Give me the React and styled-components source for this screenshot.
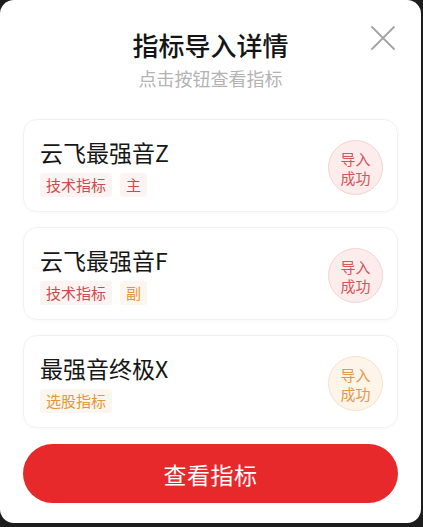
import React from "react";
import styled, { createGlobalStyle } from "styled-components";

const Global = createGlobalStyle`
  html, body { margin: 0; padding: 0; background: #1c1c1c; }
  body { font-family: "Noto Sans CJK SC", "Noto Sans", sans-serif; }
  * { box-sizing: border-box; }
`;

const Page = styled.div`
  width: 423px;
  height: 527px;
  background: #1c1c1c;
  overflow: hidden;
`;

const Modal = styled.div`
  position: relative;
  width: 421px;
  height: 523px;
  background: #fff;
  border-radius: 14px;
  padding: 27px 23px 20px 23px;
  display: flex;
  flex-direction: column;
`;

const Title = styled.h1`
  margin: 0;
  text-align: center;
  font-size: 26px;
  line-height: 36px;
  font-weight: 500;
  color: #151515;
`;

const Subtitle = styled.div`
  margin-top: 2px;
  text-align: center;
  font-size: 18px;
  line-height: 26px;
  color: #b3b3b3;
`;

const Close = styled.button`
  position: absolute;
  top: 26px;
  right: 26px;
  width: 24px;
  height: 24px;
  padding: 0;
  border: none;
  background: transparent;
  cursor: pointer;
`;

const List = styled.div`
  margin-top: 28px;
  display: flex;
  flex-direction: column;
  gap: 15px;
`;

const Card = styled.div`
  height: 93px;
  border: 1px solid #f1f1f1;
  border-radius: 14px;
  box-shadow: 0 1px 4px rgba(0, 0, 0, 0.03);
  padding: 16px 14px 0 16px;
  display: flex;
  align-items: center;
  justify-content: space-between;
`;

const Info = styled.div`
  display: flex;
  flex-direction: column;
  align-self: flex-start;
`;

const Name = styled.div`
  font-size: 23px;
  line-height: 32px;
  color: #161616;
  font-weight: 400;
`;

const Tags = styled.div`
  margin-top: 5px;
  display: flex;
  gap: 8px;
`;

const Tag = styled.span`
  font-size: 15px;
  line-height: 24px;
  padding: 0 6px;
  border-radius: 3px;
  color: ${(p) => (p.$tone === "orange" ? "#e2973b" : "#cf4a4c")};
  background: ${(p) => (p.$tone === "orange" ? "#fdf6ee" : "#fcf3f3")};
`;

const Badge = styled.div`
  width: 55px;
  height: 55px;
  border-radius: 50%;
  margin-top: -12px;
  display: flex;
  align-items: center;
  justify-content: center;
  text-align: center;
  font-size: 15px;
  line-height: 19px;
  color: ${(p) => (p.$tone === "orange" ? "#e09a48" : "#d65558")};
  background: ${(p) => (p.$tone === "orange" ? "#fdf4ea" : "#fcecec")};
  border: 1px solid ${(p) => (p.$tone === "orange" ? "#f6e2cc" : "#f3d3d3")};
`;

const Button = styled.button`
  margin-top: 16px;
  height: 59px;
  border: none;
  border-radius: 30px;
  background: #e8292c;
  color: #fff;
  font-family: inherit;
  font-size: 23px;
  letter-spacing: 0.5px;
  cursor: pointer;
`;

const items = [
  { name: "云飞最强音Z", tags: [{ t: "技术指标" }, { t: "主" }], tone: "red" },
  { name: "云飞最强音F", tags: [{ t: "技术指标" }, { t: "副", tone: "orange" }], tone: "red" },
  { name: "最强音终极X", tags: [{ t: "选股指标", tone: "orange" }], tone: "orange" },
];

export default function App() {
  return (
    <Page>
      <Global />
      <Modal>
        <Title>指标导入详情</Title>
        <Subtitle>点击按钮查看指标</Subtitle>
        <Close aria-label="关闭">
          <svg width="24" height="24" viewBox="0 0 24 24">
            <path d="M1 1 L23 23 M23 1 L1 23" stroke="#a3a3a3" strokeWidth="1.8" strokeLinecap="round" />
          </svg>
        </Close>
        <List>
          {items.map((it) => (
            <Card key={it.name}>
              <Info>
                <Name>{it.name}</Name>
                <Tags>
                  {it.tags.map((tg) => (
                    <Tag key={tg.t} $tone={tg.tone}>{tg.t}</Tag>
                  ))}
                </Tags>
              </Info>
              <Badge $tone={it.tone}>导入<br />成功</Badge>
            </Card>
          ))}
        </List>
        <Button>查看指标</Button>
      </Modal>
    </Page>
  );
}
